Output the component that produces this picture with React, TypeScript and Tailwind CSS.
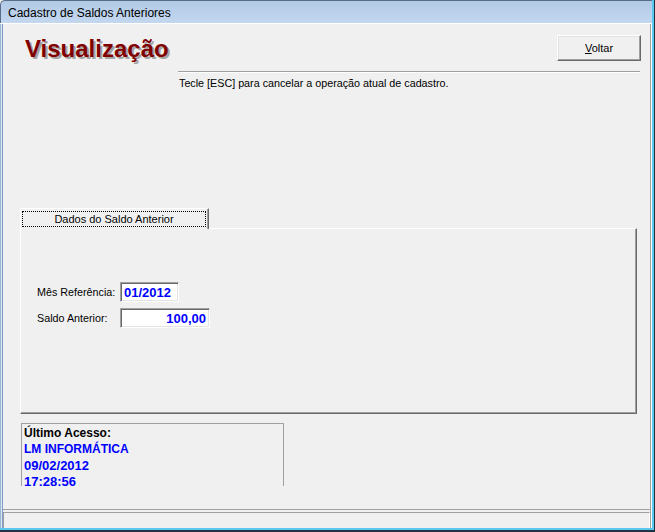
export default function App() {
  return (
    <div className="w-[655px] h-[532px] overflow-hidden flex flex-col bg-[#5bc6ee] border-r border-r-[#1e3442] border-b-2 border-b-[#1e3442] pr-[2px] pb-[2px] font-['Liberation_Sans',Arial,sans-serif] text-black">
      <div className="flex-1 flex flex-col min-h-0 bg-[#f0f0f0]">
        {/* Title bar */}
        <div className="h-[23px] shrink-0 flex items-center pl-[7px] pt-[1px] rounded-tl-[5px] border-t border-l border-[#5a6d84] bg-gradient-to-b from-[#b2cae7] to-[#c3d7ee] text-[12px] leading-none">
          Cadastro de Saldos Anteriores
        </div>
        <div className="h-px shrink-0 bg-white" />
        <div className="flex-1 flex min-h-0">
          {/* left frame */}
          <div className="w-[3px] shrink-0 border-l border-l-[#9cb6d6] bg-[#dbe6f3] border-r border-r-[#7f9dc2]" />
          {/* client */}
          <div className="flex-1 flex flex-col min-w-0">
            <div className="flex-1 flex flex-col min-h-0">
              {/* header row */}
              <div className="mt-[11px] flex items-start justify-between">
                <div className="ml-[22px] h-[28px] text-[24px] leading-[28px] font-bold text-[#800000] [text-shadow:2px_2px_0_#a4a4a4]">
                  Visualização
                </div>
                <button className="mr-[9px] w-[84px] h-[26px] flex items-center justify-center bg-[#f0f0f0] border border-t-white border-l-white border-r-[#696969] border-b-[#696969] shadow-[inset_-1px_-1px_#a0a0a0,inset_1px_1px_#e3e3e3] text-[11px] leading-none">
                  <span><span className="underline">V</span>oltar</span>
                </button>
              </div>
              {/* divider */}
              <div className="mt-[8px] ml-[175px] mr-[10px] h-[2px] border-t border-t-[#a0a0a0] border-b border-b-white" />
              <div className="mt-[4px] ml-[176px] text-[10.75px] leading-[13px]">
                Tecle [ESC] para cancelar a operação atual de cadastro.
              </div>
              {/* tabs */}
              <div className="mt-[118px] ml-[17px] mr-[13px] flex flex-col">
                <div className="flex">
                  <div className="relative z-10 -mb-px w-[189px] h-[21px] bg-[#f0f0f0] border-t border-l border-white border-r border-r-[#696969] shadow-[inset_-1px_0_#a0a0a0] rounded-tl-[2px] rounded-tr-[1px] pt-[2px] pl-[1px] pr-[2px]">
                    <div className="h-[16px] border border-dotted border-black flex items-center justify-center text-[11px] leading-none">
                      Dados do Saldo Anterior
                    </div>
                  </div>
                </div>
                <div className="h-[186px] border-t border-l border-white border-r border-b border-r-[#696969] border-b-[#696969] shadow-[inset_-1px_-1px_#a0a0a0] pt-[53px] pl-[16px] flex flex-col gap-[6px]">
                  <div className="flex items-center">
                    <div className="w-[83px] text-[10.75px] leading-none">Mês Referência:</div>
                    <div className="w-[59px] h-[20px] bg-white border border-t-[#a0a0a0] border-l-[#a0a0a0] border-r-white border-b-white shadow-[inset_1px_1px_#696969,inset_-1px_-1px_#e3e3e3] flex items-center pl-[3px] text-[13px] font-bold text-[#0000ff] leading-none">
                      01/2012
                    </div>
                  </div>
                  <div className="flex items-center">
                    <div className="w-[83px] text-[10.75px] leading-none">Saldo Anterior:</div>
                    <div className="w-[90px] h-[20px] bg-white border border-t-[#a0a0a0] border-l-[#a0a0a0] border-r-white border-b-white shadow-[inset_1px_1px_#696969,inset_-1px_-1px_#e3e3e3] flex items-center justify-end pr-[3px] text-[13px] font-bold text-[#0000ff] leading-none">
                      100,00
                    </div>
                  </div>
                </div>
              </div>
              {/* last access box */}
              <div className="mt-[9px] ml-[18px] w-[263px] h-[63px] border-t border-l border-r border-[#a0a0a0] pl-[2px] pt-[1px] text-[12px] font-bold leading-[16.4px]">
                <div className="text-black">Último Acesso:</div>
                <div className="text-[#0000ff]">LM INFORMÁTICA</div>
                <div className="text-[#0000ff] text-[13px]">09/02/2012</div>
                <div className="text-[#0000ff] text-[13px]">17:28:56</div>
              </div>
            </div>
            {/* status bar */}
            <div className="h-[19px] shrink-0 border-t border-[#a0a0a0] pt-[2px] flex">
              <div className="flex-1 border-t border-l border-[#a0a0a0] border-r border-r-white" />
            </div>
          </div>
          {/* right frame */}
          <div className="w-[2px] shrink-0 border-l border-l-[#a0a0a0] bg-white" />
        </div>
      </div>
    </div>
  );
}
